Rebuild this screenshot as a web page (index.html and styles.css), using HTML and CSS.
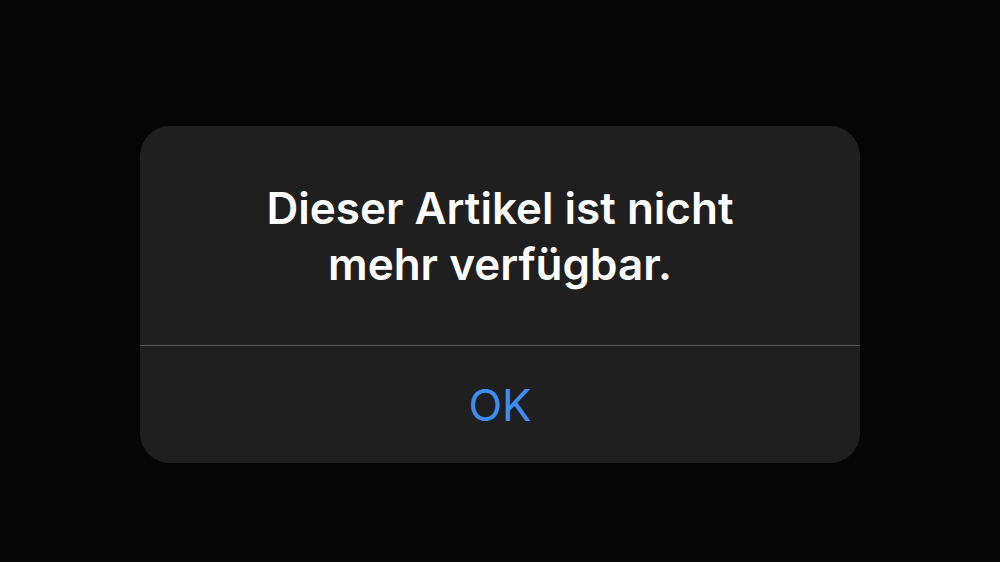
FILE: index.html
```html
<!DOCTYPE html>
<html lang="de">
<head>
<meta charset="utf-8">
<title>Hinweis</title>
<link rel="stylesheet" href="styles.css">
</head>
<body>
<div class="screen">
  <div class="alert" role="alertdialog">
    <div class="alert-body">
      <p class="alert-title">Dieser Artikel ist nicht<br>mehr verfügbar.</p>
    </div>
    <button class="alert-button" type="button">OK</button>
  </div>
</div>
</body>
</html>
```
FILE: styles.css
```css
html, body {
  margin: 0;
  padding: 0;
  background: #050505;
}

.screen {
  width: 1000px;
  height: 562px;
  display: flex;
  justify-content: center;
  padding-top: 126px;
  box-sizing: border-box;
}

.alert {
  width: 720px;
  height: 337px;
  background: #1f1f1f;
  border-radius: 30px;
  display: flex;
  flex-direction: column;
  overflow: hidden;
  font-family: Inter, "Liberation Sans", sans-serif;
}

.alert-body {
  padding: 54px 40px 53px;
  border-bottom: 1px solid #5a5a5a;
}

.alert-title {
  margin: 0;
  color: #ffffff;
  font-size: 44px;
  font-weight: 600;
  line-height: 56px;
  text-align: center;
  letter-spacing: 0;
}

.alert-button {
  flex: 1;
  background: none;
  border: 0;
  padding: 0;
  color: #3d8ef2;
  font-family: inherit;
  font-size: 44px;
  font-weight: 400;
  cursor: pointer;
}
```
